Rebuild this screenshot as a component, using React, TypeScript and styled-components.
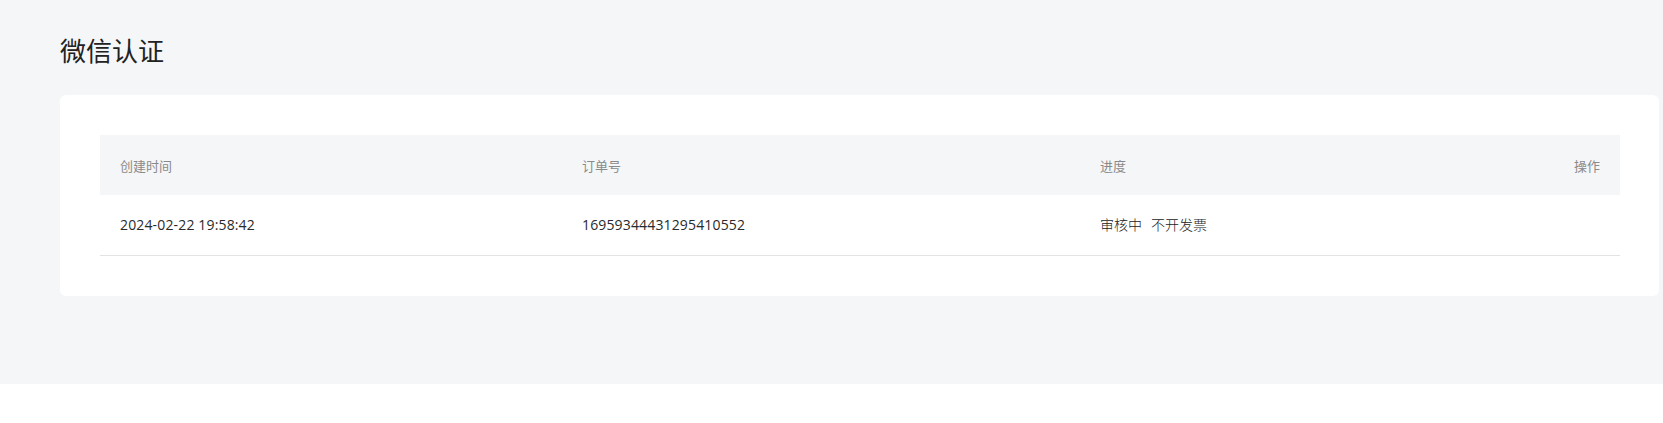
import React from "react";
import styled, { createGlobalStyle } from "styled-components";

const GlobalStyle = createGlobalStyle`
  html, body {
    margin: 0;
    padding: 0;
    background: #ffffff;
  }
  body {
    font-family: "Open Sans", "Noto Sans CJK SC", sans-serif;
    color: #222;
  }
`;

const Page = styled.div`
  background: #f5f6f8;
  padding: 33px 4px 88px 60px;
  display: flex;
  flex-direction: column;
  gap: 28px;
`;

const Title = styled.h1`
  margin: 0;
  font-family: "Noto Sans CJK SC", sans-serif;
  font-size: 26px;
  font-weight: 400;
  line-height: 34px;
  color: #222;
`;

const Card = styled.div`
  background: #ffffff;
  border-radius: 6px;
  padding: 40px 39px 40px 40px;
`;

const Table = styled.div`
  display: grid;
  grid-template-columns: 462px 518px 1fr auto;
`;

const HeadCell = styled.div<{ $align?: "left" | "right" }>`
  background: #f5f6f8;
  height: 60px;
  padding: 0 20px;
  display: flex;
  align-items: center;
  justify-content: ${(p) => (p.$align === "right" ? "flex-end" : "flex-start")};
  font-family: "Noto Sans CJK SC", sans-serif;
  font-size: 13px;
  color: #8a8a8a;
`;

const Cell = styled.div`
  height: 58px;
  padding: 0 20px 2px;
  border-bottom: 1px solid #e2e3e5;
  display: flex;
  align-items: center;
  gap: 9px;
  font-family: "Open Sans", "Noto Sans CJK SC", sans-serif;
  font-size: 14px;
  color: #2a2a2a;
`;

const Digits = styled.span`
  letter-spacing: 0.15px;
`;

const Status = styled.span`
  font-family: "Noto Sans CJK SC", sans-serif;
  font-size: 14px;
  font-weight: 300;
  color: #222;
`;

export default function App() {
  return (
    <>
      <GlobalStyle />
      <Page>
        <Title>微信认证</Title>
        <Card>
          <Table>
            <HeadCell>创建时间</HeadCell>
            <HeadCell>订单号</HeadCell>
            <HeadCell>进度</HeadCell>
            <HeadCell $align="right">操作</HeadCell>
            <Cell>
              <Digits>2024-02-22 19:58:42</Digits>
            </Cell>
            <Cell>
              <Digits>16959344431295410552</Digits>
            </Cell>
            <Cell>
              <Status>审核中</Status>
              <Status>不开发票</Status>
            </Cell>
            <Cell />
          </Table>
        </Card>
      </Page>
    </>
  );
}
